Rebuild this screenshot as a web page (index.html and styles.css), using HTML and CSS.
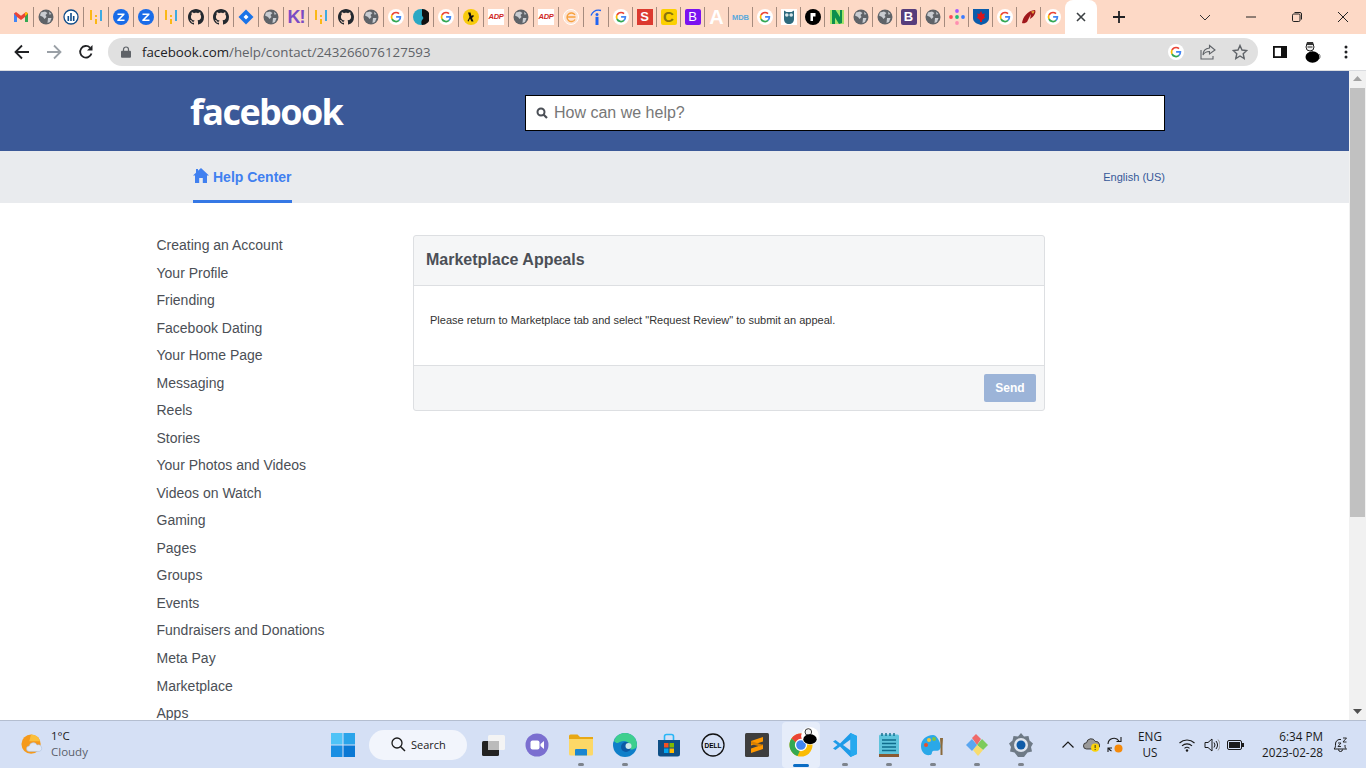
FILE: index.html
```html
<!DOCTYPE html>
<html lang="en">
<head>
    <meta charset="UTF-8">
    <title>Marketplace Appeals</title>
    <link rel="stylesheet" href="styles.css">
</head>
<body>

<svg class="defs" width="0" height="0">
    <symbol id="i-gmail" viewBox="0 0 16 16">
        <path d="M1 4v9h3V7z" fill="#4285f4"/><path d="M15 4v9h-3V7z" fill="#34a853"/>
        <path d="M1 4.500 3 3l5 3.800L13 3l2 1.500L12 8 8 11 4 8z" fill="#ea4335"/><path d="M12 3.800 13.500 3 15 4.500 12 7z" fill="#fbbc04"/>
    </symbol>
    <symbol id="i-globe" viewBox="0 0 16 16">
        <circle cx="8" cy="8" r="7.500" fill="#5f6368"/>
        <path d="M3 3.500 7 2.500 9.500 4 7.500 6 8.500 8 6.500 10 5 8 2 6.500zM10 9h3.500l-1.500 4-2.500 1zM11 2.800l2.500 2.200-2 .8z" fill="#c9ccd1"/>
    </symbol>
    <symbol id="i-allianz" viewBox="0 0 16 16">
        <circle cx="8" cy="8" r="7" fill="#fff" stroke="#0f4c8a" stroke-width="1.300"/>
        <path d="M4.500 7h1.600v5H4.500zM7.200 4h1.600v8H7.200zM9.900 7h1.600v5H9.900z" fill="#0f4c8a"/>
    </symbol>
    <symbol id="i-bars" viewBox="0 0 16 16">
        <path d="M3 1v10" stroke="#fbb400" stroke-width="1.800"/><path d="M8 6v2M8 10v5" stroke="#fbb400" stroke-width="1.800"/>
        <path d="M13 1v11" stroke="#29a5e6" stroke-width="1.800"/>
    </symbol>
    <symbol id="i-z" viewBox="0 0 16 16">
        <circle cx="8" cy="8" r="8" fill="#1a6ce8"/>
        <path d="M4.500 4.500h7v1.300L6.800 10.500h4.700v1.500h-7.200v-1.300L9 6H4.500z" fill="#fff"/>
    </symbol>
    <symbol id="i-github" viewBox="0 0 16 16">
        <path d="M8 0C3.580 0 0 3.580 0 8c0 3.540 2.290 6.530 5.470 7.590.4.070.55-.17.55-.38 0-.19-.01-.82-.01-1.490-2.010.37-2.530-.49-2.690-.94-.09-.23-.48-.94-.82-1.130-.28-.15-.68-.52-.01-.53.63-.01 1.080.58 1.230.82.72 1.210 1.870.87 2.330.66.070-.52.28-.87.51-1.070-1.780-.2-3.640-.89-3.640-3.950 0-.87.31-1.590.82-2.150-.08-.2-.36-1.020.08-2.120 0 0 .67-.21 2.200.82.64-.18 1.320-.27 2-.27s1.360.09 2 .27c1.530-1.040 2.200-.82 2.200-.82.44 1.100.16 1.920.08 2.120.51.56.82 1.270.82 2.150 0 3.070-1.870 3.750-3.650 3.950.29.25.54.73.54 1.480 0 1.070-.01 1.930-.01 2.200 0 .21.15.46.55.38A8.010 8.010 0 0016 8c0-4.420-3.580-8-8-8z" fill="#24292f"/>
    </symbol>
    <symbol id="i-jira" viewBox="0 0 16 16">
        <path d="M8 .5 15.500 8 8 15.500.5 8z" fill="#1a73e8"/><path d="M8 5.500 10.500 8 8 10.500 5.500 8z" fill="#fff"/>
    </symbol>
    <symbol id="i-google" viewBox="0 0 16 16">
        <circle cx="8" cy="8" r="8" fill="#fff"/>
        <path d="M8 3.500A4.500 4.500 0 0 1 11 4.700" fill="none" stroke="#ea4335" stroke-width="1.700"/>
        <path d="M8 3.500A4.500 4.500 0 0 0 4 6" fill="none" stroke="#ea4335" stroke-width="1.700"/>
        <path d="M4 6A4.500 4.500 0 0 0 4 10" fill="none" stroke="#fbbc04" stroke-width="1.700"/>
        <path d="M4 10A4.500 4.500 0 0 0 11 11.400" fill="none" stroke="#34a853" stroke-width="1.700"/>
        <path d="M8.100 7.900h4.300A4.500 4.500 0 0 1 11 11.400" fill="none" stroke="#4285f4" stroke-width="1.700"/>
    </symbol>
    <symbol id="i-moon" viewBox="0 0 16 16">
        <circle cx="8" cy="8" r="8" fill="#2ba8c4"/>
        <path d="M9 0a8 8 0 0 1 0 16c-1-1-.5-3-.5-4L10.500 9 9 6.500z" fill="#111"/>
    </symbol>
    <symbol id="i-yp" viewBox="0 0 16 16">
        <circle cx="8" cy="8" r="8" fill="#f8cb0c"/>
        <path d="M5 3.500h2.500L8.500 7l1.500-1 1 1-2 2L10.500 12.500H8.500L7 9.500 5.500 12.500 4.500 12 6.500 8z" fill="#111"/>
    </symbol>
    <symbol id="i-e" viewBox="0 0 16 16">
        <circle cx="8" cy="8" r="7.500" fill="#fde3d3" stroke="#fff" stroke-width="1"/>
        <path d="M3.500 8h9M12 6A4.300 4.300 0 1 0 12 10.500" fill="none" stroke="#f7a13c" stroke-width="1.400"/>
    </symbol>
    <symbol id="i-info" viewBox="0 0 16 16">
        <circle cx="9" cy="5.500" r="1.500" fill="#2164f3"/><path d="M7.500 7.800h3V16h-3z" fill="#2164f3"/>
        <path d="M3 6.500C5 2 9 .5 13 1.500" fill="none" stroke="#2164f3" stroke-width="1.300"/>
    </symbol>
    <symbol id="i-owl" viewBox="0 0 16 16">
        <rect width="16" height="16" fill="#fff"/>
        <path d="M3 1.500 5.500 3h5L13 1.500V10c0 3-2 5-5 5s-5-2-5-5z" fill="#2d6a7d"/>
        <circle cx="5.800" cy="6" r="1.800" fill="#d6e6ea"/><circle cx="10.200" cy="6" r="1.800" fill="#d6e6ea"/>
    </symbol>
    <symbol id="i-r" viewBox="0 0 16 16">
        <circle cx="8" cy="8" r="8" fill="#000"/>
        <path d="M5.500 4h5v3.500H8V12H5.500z" fill="#fff"/>
    </symbol>
    <symbol id="i-n" viewBox="0 0 16 16">
        <path d="M1 1h14v14H1z" fill="#a4e36c"/>
        <path d="M3 1h3.500L11 8V1h2v13L10 15 6 8.500V15H3z" fill="#0b8f4d"/>
    </symbol>
    <symbol id="i-dots" viewBox="0 0 16 16">
        <circle cx="8" cy="2" r="1.900" fill="#a259ff"/><circle cx="2" cy="8" r="1.900" fill="#ff4d5a"/>
        <circle cx="8" cy="8" r="1.900" fill="#1abc7b"/><circle cx="14" cy="8" r="1.900" fill="#3a7bff"/>
        <circle cx="8" cy="14" r="1.900" fill="#ff8fb1"/>
    </symbol>
    <symbol id="i-shield" viewBox="0 0 16 16">
        <path d="M0 0h16v9c0 4-4 6-8 7-4-1-8-3-8-7z" fill="#0b5cab"/>
        <path d="M8 2 9.500 5 12 4.500 11 7.500 12.500 8.500 9 11v2H7v-2L3.500 8.500 5 7.500 4 4.500 6.500 5z" fill="#d8171e"/>
    </symbol>
    <symbol id="i-swoosh" viewBox="0 0 16 16">
        <path d="M1 14C2 8 6 2 14 1c1.500 2-1 7-5 9l1-5-4 8c-2 1.500-4 1.500-5 1z" fill="#a0181c"/>
        <path d="M10 2.500c2-.8 3.500-.6 3.500 0L12 5z" fill="#e8a33c"/>
    </symbol>
</svg>

<div class="tabstrip">
    <div class="tab"><svg class="fav"><use href="#i-gmail"/></svg></div>
    <div class="tab"><svg class="fav"><use href="#i-globe"/></svg></div>
    <div class="tab"><svg class="fav"><use href="#i-allianz"/></svg></div>
    <div class="tab"><svg class="fav"><use href="#i-bars"/></svg></div>
    <div class="tab"><svg class="fav"><use href="#i-z"/></svg></div>
    <div class="tab"><svg class="fav"><use href="#i-z"/></svg></div>
    <div class="tab"><svg class="fav"><use href="#i-bars"/></svg></div>
    <div class="tab"><svg class="fav"><use href="#i-github"/></svg></div>
    <div class="tab"><svg class="fav"><use href="#i-github"/></svg></div>
    <div class="tab"><svg class="fav"><use href="#i-jira"/></svg></div>
    <div class="tab"><svg class="fav"><use href="#i-globe"/></svg></div>
    <div class="tab"><span class="fav-k">K!</span></div>
    <div class="tab"><svg class="fav"><use href="#i-bars"/></svg></div>
    <div class="tab"><svg class="fav"><use href="#i-github"/></svg></div>
    <div class="tab"><svg class="fav"><use href="#i-globe"/></svg></div>
    <div class="tab"><svg class="fav"><use href="#i-google"/></svg></div>
    <div class="tab"><svg class="fav"><use href="#i-moon"/></svg></div>
    <div class="tab"><svg class="fav"><use href="#i-google"/></svg></div>
    <div class="tab"><svg class="fav"><use href="#i-yp"/></svg></div>
    <div class="tab"><span class="fav-adp">ADP</span></div>
    <div class="tab"><svg class="fav"><use href="#i-globe"/></svg></div>
    <div class="tab"><span class="fav-adp">ADP</span></div>
    <div class="tab"><svg class="fav"><use href="#i-e"/></svg></div>
    <div class="tab"><svg class="fav"><use href="#i-info"/></svg></div>
    <div class="tab tab-sm"><svg class="fav"><use href="#i-google"/></svg></div>
    <div class="tab tab-sm"><span class="fav-box fav-s">S</span></div>
    <div class="tab tab-sm"><span class="fav-box fav-c">C</span></div>
    <div class="tab tab-sm"><span class="fav-box fav-b">B</span></div>
    <div class="tab tab-sm"><span class="fav-a">A</span></div>
    <div class="tab tab-sm"><span class="fav-mdb">MDB</span></div>
    <div class="tab tab-sm"><svg class="fav"><use href="#i-google"/></svg></div>
    <div class="tab tab-sm"><svg class="fav"><use href="#i-owl"/></svg></div>
    <div class="tab tab-sm"><svg class="fav"><use href="#i-r"/></svg></div>
    <div class="tab tab-sm"><svg class="fav"><use href="#i-n"/></svg></div>
    <div class="tab tab-sm"><svg class="fav"><use href="#i-globe"/></svg></div>
    <div class="tab tab-sm"><svg class="fav"><use href="#i-globe"/></svg></div>
    <div class="tab tab-sm"><span class="fav-box fav-b2">B</span></div>
    <div class="tab tab-sm"><svg class="fav"><use href="#i-globe"/></svg></div>
    <div class="tab tab-sm"><svg class="fav"><use href="#i-dots"/></svg></div>
    <div class="tab tab-sm"><svg class="fav"><use href="#i-shield"/></svg></div>
    <div class="tab tab-sm"><svg class="fav"><use href="#i-google"/></svg></div>
    <div class="tab tab-sm"><svg class="fav"><use href="#i-swoosh"/></svg></div>
    <div class="tab tab-sm tab-last"><svg class="fav"><use href="#i-google"/></svg></div>
    <div class="tab-active">
        <svg width="10" height="10" viewBox="0 0 10 10"><path d="M1 1l8 8M9 1 1 9" stroke="#3c4043" stroke-width="1.600"/></svg>
    </div>
    <div class="new-tab">
        <svg width="12" height="12" viewBox="0 0 12 12"><path d="M6 0v12M0 6h12" stroke="#202124" stroke-width="1.800"/></svg>
    </div>
    <div class="win-controls">
        <div class="win-btn"><svg width="12" height="7" viewBox="0 0 12 7"><path d="M1 1l5 5 5-5" fill="none" stroke="#333" stroke-width="1"/></svg></div>
        <div class="win-btn"><svg width="10" height="10" viewBox="0 0 10 10"><path d="M0 5h10" stroke="#222" stroke-width="1"/></svg></div>
        <div class="win-btn"><svg width="10" height="10" viewBox="0 0 10 10"><rect x=".5" y="2" width="7.500" height="7.500" rx="1.200" fill="none" stroke="#222"/><path d="M2.500 .5h5.500a1.500 1.500 0 0 1 1.500 1.500v5.500" fill="none" stroke="#222"/></svg></div>
        <div class="win-btn"><svg width="10" height="10" viewBox="0 0 10 10"><path d="M0 0l10 10M10 0 0 10" stroke="#222" stroke-width="1"/></svg></div>
    </div>
</div>

<div class="toolbar">
    <svg class="nav-icon" viewBox="0 0 16 16"><path d="M15 8H2M8 1.500 1.500 8 8 14.500" fill="none" stroke="#202124" stroke-width="1.800"/></svg>
    <svg class="nav-icon" viewBox="0 0 16 16"><path d="M1 8h13M8 1.500 14.500 8 8 14.500" fill="none" stroke="#9aa0a6" stroke-width="1.800"/></svg>
    <svg class="nav-icon" viewBox="0 0 16 16"><path d="M13.500 9.500A5.800 5.800 0 1 1 12 3.600" fill="none" stroke="#202124" stroke-width="1.800"/><path d="M14.500 1v5.500H9z" fill="#202124"/></svg>
    <div class="omnibox">
        <svg class="lock" viewBox="0 0 10 12"><path d="M2.500 5V3.500a2.500 2.500 0 0 1 5 0V5" fill="none" stroke="#5f6368" stroke-width="1.200"/><rect y="4.800" width="10" height="7" rx="1" fill="#5f6368"/></svg>
        <span class="url"><span class="url-host">facebook.com</span>/help/contact/243266076127593</span>
        <svg class="omni-g"><use href="#i-google"/></svg>
        <svg class="omni-icon" viewBox="0 0 16 16"><path d="M9.500 1.500 15 6l-5.500 4V7.500C6 7.500 4 9 3 11c0-4 2.500-6.500 6.500-7zM1 6v9h12v-3" fill="none" stroke="#5f6368" stroke-width="1.100"/></svg>
        <svg class="omni-icon" viewBox="0 0 16 16"><path d="M8 1.500 10 6l4.800.5-3.600 3.200 1 4.800L8 12l-4.200 2.500 1-4.800L1.200 6.500 6 6z" fill="none" stroke="#5f6368" stroke-width="1.400"/></svg>
    </div>
    <svg class="side-icon" viewBox="0 0 14 12"><rect x=".9" y=".9" width="12.200" height="10.200" fill="#fff" stroke="#111" stroke-width="1.800"/><rect x="8" y="1" width="5" height="10" fill="#111"/></svg>
    <svg class="avatar" viewBox="0 0 18 22"><circle cx="7" cy="6" r="4" fill="#eee" stroke="#222"/><path d="M3 4 4 1h6l1 3z" fill="#333"/><path d="M4.500 6h5" stroke="#222"/><ellipse cx="9.500" cy="16" rx="7" ry="5.800" fill="#000"/><path d="M16 13c1.500 1 1.500 4 0 5" fill="none" stroke="#777"/></svg>
    <svg class="menu-dots" viewBox="0 0 4 14"><circle cx="2" cy="2" r="1.500" fill="#202124"/><circle cx="2" cy="7" r="1.500" fill="#202124"/><circle cx="2" cy="12" r="1.500" fill="#202124"/></svg>
</div>

<div class="viewport">
    <div class="page">
        <header class="fb-header">
            <div class="fb-logo">facebook</div>
            <div class="search-box">
                <svg class="search-icon" viewBox="0 0 12 12"><circle cx="5" cy="5" r="3.500" fill="none" stroke="#4b4f56" stroke-width="2"/><path d="M7.500 7.500 11 11" stroke="#4b4f56" stroke-width="2.200"/></svg>
                <span class="search-text">How can we help?</span>
            </div>
        </header>
        <nav class="subnav">
            <a class="help-tab">
                <svg class="home-icon" viewBox="0 0 16 15"><path d="M8 0 16 7.500h-2V15H9.800v-5H6.200v5H2V7.500H0L3 4.700V1h2v1.800z" fill="#4080f0"/></svg>
                Help Center
            </a>
            <a class="lang">English (US)</a>
        </nav>
        <div class="main">
            <ul class="side-menu">
                <li>Creating an Account</li>
                <li>Your Profile</li>
                <li>Friending</li>
                <li>Facebook Dating</li>
                <li>Your Home Page</li>
                <li>Messaging</li>
                <li>Reels</li>
                <li>Stories</li>
                <li>Your Photos and Videos</li>
                <li>Videos on Watch</li>
                <li>Gaming</li>
                <li>Pages</li>
                <li>Groups</li>
                <li>Events</li>
                <li>Fundraisers and Donations</li>
                <li>Meta Pay</li>
                <li>Marketplace</li>
                <li>Apps</li>
            </ul>
            <section class="card">
                <h2 class="card-title">Marketplace Appeals</h2>
                <div class="card-body">Please return to Marketplace tab and select "Request Review" to submit an appeal.</div>
                <div class="card-foot"><button class="send-btn">Send</button></div>
            </section>
        </div>
    </div>
    <div class="scrollbar">
        <svg class="sb-arrow" viewBox="0 0 9 5"><path d="M4.500 0 9 5H0z" fill="#a3a3a3"/></svg>
        <div class="sb-thumb"></div>
        <svg class="sb-arrow sb-down" viewBox="0 0 9 5"><path d="M0 0h9L4.500 5z" fill="#505050"/></svg>
    </div>
</div>

<footer class="taskbar">
    <div class="weather">
        <svg class="weather-icon" viewBox="0 0 24 24"><circle cx="11" cy="11" r="10.500" fill="#f59a1c"/><path d="M11 .5A10.500 10.500 0 0 1 21 8H9z" fill="#fbbf3b"/><path d="M9 19a3 3 0 0 1 0-6 4.500 4.500 0 0 1 8.500-1 3.500 3.500 0 0 1 2.500 7z" fill="#dfe8f6" stroke="#a7bcdc" stroke-width=".6"/></svg>
        <div class="weather-text"><div>1°C</div><div class="weather-sub">Cloudy</div></div>
    </div>
    <div class="task-item">
        <svg class="task-icon" viewBox="0 0 24 24"><path d="M0 0h11.500v11.500H0z" fill="#4fc3f7"/><path d="M12.500 0H24v11.500H12.500z" fill="#2aa4ea"/><path d="M0 12.500h11.500V24H0z" fill="#1a8fe3"/><path d="M12.500 12.500H24V24H12.500z" fill="#0a78d4"/></svg>
    </div>
    <div class="search-pill">
        <svg width="15" height="15" viewBox="0 0 15 15"><circle cx="6" cy="6" r="5" fill="none" stroke="#1a1a1a" stroke-width="1.300"/><path d="M9.700 9.700 14 14" stroke="#1a1a1a" stroke-width="1.500"/></svg>
        <span>Search</span>
    </div>
    <div class="task-item">
        <svg class="task-icon" viewBox="0 0 24 24"><rect x="1" y="8" width="17" height="15" rx="1.500" fill="#222"/><rect x="7" y="2" width="17" height="15" rx="1.500" fill="#f4f4f4"/><path d="M7 8h11v9H7z" fill="#bbb"/></svg>
    </div>
    <div class="task-item">
        <svg class="task-icon" viewBox="0 0 24 24"><circle cx="12" cy="12" r="11.500" fill="#7b6fd0"/><rect x="5.500" y="7.500" width="9" height="9" rx="2" fill="#fff"/><path d="M15.500 11 19 8v8l-3.500-3z" fill="#fff"/></svg>
    </div>
    <div class="task-item running">
        <svg class="task-icon" viewBox="0 0 24 24"><path d="M0 3a1.500 1.500 0 0 1 1.500-1.500h7L11 4h13v4H0z" fill="#e8a815"/><path d="M0 6h24v15a1.500 1.500 0 0 1-1.500 1.500h-21A1.500 1.500 0 0 1 0 21z" fill="#fcd867"/><path d="M7 16h10a1 1 0 0 1 1 1v5.500H6V17a1 1 0 0 1 1-1z" fill="#1a86d0"/></svg>
    </div>
    <div class="task-item running">
        <svg class="task-icon" viewBox="0 0 24 24"><circle cx="12" cy="12" r="12" fill="#0f7fc9"/><path d="M1 8C3 2 8 0 12 0c7 0 12 5 12 12 0 3-3 4.500-6 4.500-3 0-4-1.500-4-2.500 2-1 2-6-3-6-3 0-4.500 1-6 2-1.500 .5-3-1-4-2z" fill="#3ecf8e"/><circle cx="13" cy="14" r="5" fill="#0c59a4"/><circle cx="15.500" cy="13" r="3" fill="#cfe6ea"/></svg>
    </div>
    <div class="task-item">
        <svg class="task-icon" viewBox="0 0 24 24"><path d="M1 7h22v14a2.500 2.500 0 0 1-2.500 2.500h-17A2.500 2.500 0 0 1 1 21z" fill="#0e4f86"/><path d="M7.500 7V3.500a2 2 0 0 1 2-2h5a2 2 0 0 1 2 2V7" fill="none" stroke="#29b6f6" stroke-width="1.600"/><path d="M7 10h4.500v4.500H7z" fill="#f25022"/><path d="M12.500 10H17v4.500h-4.500z" fill="#7fba00"/><path d="M7 15.500h4.500V20H7z" fill="#00a4ef"/><path d="M12.500 15.500H17V20h-4.500z" fill="#ffb900"/></svg>
    </div>
    <div class="task-item">
        <svg class="task-icon" viewBox="0 0 24 24"><circle cx="12" cy="12" r="11" fill="none" stroke="#111" stroke-width="1.300"/><text x="12" y="14.500" class="dell-text">DELL</text></svg>
    </div>
    <div class="task-item">
        <svg class="task-icon" viewBox="0 0 24 24"><rect width="24" height="24" rx="1.500" fill="#3e3e3e"/><path d="M18 4v4.500L6 12.500V8zM18 11.500V16L6 20v-4.500z" fill="#ff9800"/><path d="M6 8l12 4-3 1.500L6 11z" fill="#d97f00"/></svg>
    </div>
    <div class="task-item task-active">
        <svg class="task-icon" viewBox="0 0 24 24"><circle cx="12" cy="12" r="11.500" fill="#fbbc04"/><path d="M12 .5A11.500 11.500 0 0 1 22 6.500H12a5.500 5.500 0 0 0-5 3L2.500 5.500A11.500 11.500 0 0 1 12 .5z" fill="#ea4335"/><path d="M2.500 5.500 7 9.500a5.500 5.500 0 0 0 4 8l-2.500 5.500A11.500 11.500 0 0 1 2.500 5.500z" fill="#34a853"/><circle cx="12" cy="12" r="5.500" fill="#4285f4" stroke="#fff" stroke-width="1.300"/></svg>
        <svg class="task-badge" viewBox="0 0 16 18"><circle cx="8" cy="8" r="8" fill="#fff"/><circle cx="6.500" cy="4.500" r="3" fill="#eee" stroke="#222" stroke-width=".8"/><ellipse cx="8" cy="11" rx="6" ry="4.500" fill="#000"/></svg>
    </div>
    <div class="task-item running">
        <svg class="task-icon" viewBox="0 0 24 24"><path d="M17.500 0 24 3v18l-6.500 3L7 13.500 2.500 17 0 15.500 4.500 12 0 8.500 2.500 7 7 10.500z" fill="#1e9be8"/><path d="M17.500 6.500 10 12l7.500 5.500z" fill="#d6e0f5"/><path d="M17.500 0 24 3v18l-6.500 3z" fill="#26a9ef"/></svg>
    </div>
    <div class="task-item running">
        <svg class="task-icon" viewBox="0 0 20 24"><rect y="1.500" width="20" height="22.500" rx="1.500" fill="#5fc4dc"/><rect y="21" width="20" height="3" fill="#8a5a32"/><path d="M3 0v3M7 0v3M11 0v3M15 0v3" stroke="#0f6c8c" stroke-width="1.400"/><path d="M3 7h14M3 10.500h14M3 14h14M3 17.500h14" stroke="#0f6c8c" stroke-width="1.400"/></svg>
    </div>
    <div class="task-item running">
        <svg class="task-icon" viewBox="0 0 24 24"><path d="M12 2C5 2 0 7 0 13s4 10 9 9c3-.5 1-3 3-4s5 1 7-2c1.500-2 1-4 0-6-1-3-3.500-8-7-8z" fill="#2aa8e8"/><circle cx="5" cy="12" r="2" fill="#e8502a"/><circle cx="8" cy="7" r="2" fill="#f5c33b"/><circle cx="13" cy="6" r="2" fill="#7fc241"/><path d="M19 5h3l-.5 8v9h-2v-9z" fill="#8a6a3c"/></svg>
    </div>
    <div class="task-item running">
        <svg class="task-icon" viewBox="0 0 24 24"><path d="M12 12 7 5l4-4 5 5z" fill="#ef6a6a"/><path d="M12 12l5-6 6 6-5 5z" fill="#7ccb5c"/><path d="M12 12l6 5-5 6-5-6z" fill="#f7dc6f"/><path d="M12 12l-5 6-6-6 6-6z" fill="#5aa6f0"/></svg>
    </div>
    <div class="task-item running">
        <svg class="task-icon" viewBox="0 0 24 24"><path d="M12 0l3 3.500 4.500-.5 1 4.500L24 10.500 22 14l1 4.500-4.500 1L15 24h-6l-3.500-4.500-4.500-1L2 14 0 10.500l3.500-3 1-4.500L9 3.500z" fill="#6e7a86"/><circle cx="12" cy="12" r="7" fill="#dfe5ee"/><circle cx="12" cy="12" r="4.500" fill="#0f5ca8"/></svg>
    </div>
    <div class="tray">
        <svg class="tray-chevron" width="12" height="7" viewBox="0 0 12 7"><path d="M.5 6.500 6 1l5.500 5.500" fill="none" stroke="#1a1a1a" stroke-width="1.200"/></svg>
        <div class="tray-cloud">
            <svg width="18" height="15" viewBox="0 0 20 16"><path d="M4 13a3.500 3.500 0 0 1 0-7 5 5 0 0 1 9.500-1.500A4.500 4.500 0 0 1 16 13z" fill="#9a9a9a" stroke="#222" stroke-width=".9"/><circle cx="13.500" cy="11.500" r="4.500" fill="#fbd40a"/><path d="M13.500 8.500v3.500M13.500 13v1.200" stroke="#222" stroke-width="1"/></svg>
        </div>
        <svg class="tray-sync" width="18" height="18" viewBox="0 0 18 18"><path d="M2 8a6 6 0 0 1 11-3M15 1v4.500h-4.500M2 16v-4h4M2.500 12a6 6 0 0 0 3 3" fill="none" stroke="#1a1a1a" stroke-width="1.100"/><circle cx="12.500" cy="12.500" r="4" fill="#f58a0b"/></svg>
        <div class="tray-lang"><div>ENG</div><div>US</div></div>
        <svg class="tray-wifi" width="16" height="14" viewBox="0 0 16 14"><path d="M.5 5a11 11 0 0 1 15 0M3 7.800a7.500 7.500 0 0 1 10 0M5.500 10.300a3.800 3.800 0 0 1 5 0" fill="none" stroke="#1a1a1a" stroke-width="1.100"/><circle cx="8" cy="12.500" r="1.200" fill="#1a1a1a"/></svg>
        <svg class="tray-sound" width="16" height="14" viewBox="0 0 16 14"><path d="M1 4.500h3L8 1v12L4 9.500H1z" fill="none" stroke="#1a1a1a"/><path d="M10 4.500a4 4 0 0 1 0 5M12 3a6.500 6.500 0 0 1 0 8" fill="none" stroke="#1a1a1a"/><path d="M14 1.500a8.500 8.500 0 0 1 0 11" fill="none" stroke="#999"/></svg>
        <svg class="tray-batt" width="17" height="10" viewBox="0 0 17 10"><rect x=".5" y=".5" width="14" height="9" rx="1.500" fill="none" stroke="#1a1a1a"/><rect x="2" y="2" width="11" height="6" fill="#1a1a1a"/><rect x="15" y="3" width="2" height="4" fill="#1a1a1a"/></svg>
        <div class="tray-clock"><div>6:34 PM</div><div>2023-02-28</div></div>
        <svg class="tray-bell" width="15" height="15" viewBox="0 0 15 15"><path d="M1 12c1.500-1 1.500-3 1.500-5A4.500 4.500 0 0 1 8 2.500M1 12h12.500c-1.500-1-1.500-2-1.500-4M5.500 12.500a2 2 0 0 0 4 0" fill="none" stroke="#1a1a1a"/><path d="M10 1h3.500L10 5h3.500M5 6h3L5 9.500h3" fill="none" stroke="#1a1a1a" stroke-width=".9"/></svg>
    </div>
</footer>

</body>
</html>
```

FILE: styles.css
```css
* {
    box-sizing: border-box;
}
html, body {
    height: 100%;
}
body {
    margin: 0;
    display: flex;
    flex-direction: column;
    overflow: hidden;
    font-family: "Liberation Sans", Arial, sans-serif;
    background: #fff;
}
.defs {
    position: absolute;
}

/* browser tabs */
.tabstrip {
    height: 34px;
    flex: none;
    display: flex;
    align-items: stretch;
    padding-left: 9px;
    background: #fdd9c6;
}
.tab {
    width: 25px;
    flex: none;
    display: flex;
    align-items: center;
    justify-content: center;
    overflow: hidden;
    padding-right: 1px;
    background: linear-gradient(#a58b7e, #a58b7e) right 7px / 1px 20px no-repeat;
}
.tab-sm {
    width: 24px;
}
.tab-last {
    background: none;
}
.fav {
    width: 16px;
    height: 16px;
}
.fav-k {
    color: #7b4bc4;
    font: bold 18px "Liberation Sans", sans-serif;
    letter-spacing: -1px;
}
.fav-adp {
    width: 16px;
    height: 16px;
    background: #fff;
    color: #d0271d;
    font: italic bold 7.500px/16px "Liberation Sans", sans-serif;
    letter-spacing: -.3px;
    text-align: center;
}
.fav-box {
    width: 16px;
    height: 16px;
    border-radius: 2px;
    color: #fff;
    font: bold 13px/16px "Liberation Sans", sans-serif;
    text-align: center;
}
.fav-s { background: #dc3a30; border-radius: 0; }
.fav-c { background: #fcd000; color: #8a7410; font-size: 15px; }
.fav-b { background: #7a12f0; font-weight: normal; }
.fav-b2 { background: #563d7c; }
.fav-a {
    color: #fff;
    font: bold 20px/24px "Liberation Sans", sans-serif;
}
.fav-mdb {
    color: #5aa9dd;
    font: bold 7.500px "Liberation Sans", sans-serif;
}
.tab-active {
    width: 32px;
    flex: none;
    display: flex;
    align-items: center;
    justify-content: center;
    background: #fff;
    border-radius: 8px 8px 0 0;
}
.new-tab {
    width: 44px;
    display: flex;
    align-items: center;
    justify-content: center;
}
.win-controls {
    margin-left: auto;
    display: flex;
}
.win-btn {
    width: 46px;
    display: flex;
    align-items: center;
    justify-content: center;
}

/* address bar */
.toolbar {
    height: 37px;
    flex: none;
    display: flex;
    align-items: center;
    padding-left: 14px;
    background: #fff;
    border-bottom: 1px solid #dadce0;
}
.nav-icon {
    width: 16px;
    height: 16px;
    margin-right: 16px;
}
.omnibox {
    width: 1150px;
    height: 28px;
    margin-left: -2px;
    display: flex;
    align-items: center;
    padding: 0 10px 0 13px;
    border-radius: 14px;
    background: #e0e0e0;
}
.lock {
    width: 10px;
    height: 12px;
    margin-right: 11px;
}
.url {
    flex: 1;
    color: #5f6368;
    font: 13.300px "Open Sans", sans-serif;
}
.url-host {
    color: #202124;
}
.omni-g {
    width: 16px;
    height: 16px;
    margin-right: 16px;
}
.omni-icon {
    width: 16px;
    height: 16px;
    margin-right: 16px;
}
.omni-icon:last-child {
    margin-right: 0;
}
.side-icon {
    width: 14px;
    height: 12px;
    margin-left: 15px;
}
.avatar {
    width: 18px;
    height: 22px;
    margin-left: 16px;
}
.menu-dots {
    width: 4px;
    height: 14px;
    margin-left: 23px;
}

/* page */
.viewport {
    flex: 1;
    min-height: 0;
    display: flex;
}
.page {
    flex: 1;
    min-width: 0;
    overflow: hidden;
}
.fb-header {
    height: 80px;
    display: flex;
    align-items: center;
    padding-left: 190px;
    background: #3b5998;
}
.fb-logo {
    width: 335px;
    color: #fff;
    font: bold 36px "Open Sans", sans-serif;
    letter-spacing: -1.600px;
}
.search-box {
    width: 640px;
    height: 36px;
    margin-top: 4px;
    display: flex;
    align-items: center;
    padding-left: 10px;
    background: #fff;
    border: 1px solid #000;
}
.search-icon {
    width: 12px;
    height: 12px;
    margin-right: 6px;
}
.search-text {
    color: #777;
    font-size: 16px;
}
.subnav {
    height: 52px;
    display: flex;
    justify-content: space-between;
    padding: 0 184px 0 193px;
    background: #e9ebee;
}
.help-tab {
    display: flex;
    align-items: center;
    gap: 4px;
    padding-top: 2px;
    border-bottom: 3px solid #3578e5;
    color: #4080f0;
    font-size: 14px;
    font-weight: bold;
}
.home-icon {
    width: 16px;
    height: 15px;
    margin-top: -3px;
}
.lang {
    align-self: center;
    color: #365899;
    font-size: 11px;
}
.main {
    display: flex;
    align-items: flex-start;
    padding: 29px 0 0 156.500px;
}
.side-menu {
    width: 256.500px;
    flex: none;
    margin: 0;
    padding: 0;
    list-style: none;
    color: #4b4f56;
    font-size: 14px;
    line-height: 27.530px;
}
.card {
    width: 632px;
    height: 176px;
    margin-top: 3px;
    display: flex;
    flex-direction: column;
    overflow: hidden;
    background: #f5f6f7;
    border: 1px solid #dddfe2;
    border-radius: 3px;
}
.card-title {
    height: 50px;
    flex: none;
    margin: 0;
    padding-left: 12px;
    color: #4b4f56;
    font-size: 16px;
    line-height: 48px;
    border-bottom: 1px solid #dddfe2;
}
.card-body {
    height: 80px;
    flex: none;
    padding: 27px 16px 0;
    color: #333;
    font-size: 11px;
    line-height: 15px;
    background: #fff;
    border-bottom: 1px solid #dddfe2;
}
.card-foot {
    flex: 1;
    display: flex;
    justify-content: flex-end;
    align-items: flex-start;
    padding: 8px 8px 0 0;
}
.send-btn {
    width: 52px;
    height: 28px;
    padding: 0;
    border: 0;
    border-radius: 2px;
    color: #fff;
    background: #9cb4d8;
    font: bold 12px "Liberation Sans", sans-serif;
}
.scrollbar {
    width: 17px;
    flex: none;
    display: flex;
    flex-direction: column;
    align-items: center;
    padding-top: 5px;
    background: #f1f1f1;
}
.sb-arrow {
    width: 9px;
    height: 5px;
    flex: none;
}
.sb-thumb {
    width: 15px;
    height: 429px;
    margin-top: 7px;
    background: #c1c1c1;
}
.sb-down {
    margin-top: auto;
    margin-bottom: 6px;
}

/* windows taskbar */
.taskbar {
    height: 48px;
    flex: none;
    display: flex;
    align-items: center;
    background: #d5e0f5;
    border-top: 1px solid #b4bed0;
    color: #1a1a1a;
    font-family: "Open Sans", sans-serif;
}
.weather {
    width: 321px;
    flex: none;
    display: flex;
    align-items: center;
    gap: 8px;
    padding: 0 0 2px 21px;
    font-size: 11.500px;
    line-height: 16px;
}
.weather-icon {
    width: 22px;
    height: 22px;
    margin-top: 2px;
}
.weather-sub {
    color: #5a5f6a;
}
.task-item {
    position: relative;
    width: 44px;
    height: 46px;
    flex: none;
    display: flex;
    align-items: center;
    justify-content: center;
}
.task-icon {
    width: 24px;
    height: 24px;
}
.running::after {
    content: "";
    position: absolute;
    left: 19px;
    bottom: 2px;
    width: 6px;
    height: 3px;
    border-radius: 2px;
    background: #7d838c;
}
.task-active {
    width: 38px;
    margin: 0 3px;
    border-radius: 4px;
    background: #e6edfa;
}
.task-active::after {
    content: "";
    position: absolute;
    left: 11px;
    bottom: 1px;
    width: 16px;
    height: 3px;
    border-radius: 2px;
    background: #0a6cc4;
}
.task-badge {
    position: absolute;
    top: 5px;
    right: 1px;
    width: 18px;
    height: 20px;
}
.dell-text {
    font: bold 6.500px "Liberation Sans", sans-serif;
    text-anchor: middle;
}
.search-pill {
    width: 98px;
    height: 30px;
    flex: none;
    display: flex;
    align-items: center;
    gap: 5px;
    margin: 0 4px;
    padding-left: 22px;
    border-radius: 15px;
    background: #f2f5fc;
    font-size: 11px;
}
.tray {
    flex: 1;
    display: flex;
    align-items: center;
    padding-left: 19px;
    font-size: 11.700px;
    line-height: 16px;
}
.tray-cloud {
    display: flex;
    margin-left: 9px;
}
.tray-sync {
    margin-left: 5px;
}
.tray-lang {
    width: 30px;
    margin: -2px 0 0 11px;
    text-align: center;
}
.tray-wifi {
    margin-left: 14px;
}
.tray-sound {
    margin-left: 9px;
}
.tray-batt {
    margin-left: 7px;
}
.tray-clock {
    width: 70px;
    margin: -2px 0 0 9px;
    text-align: right;
}
.tray-bell {
    margin-left: 10px;
}
```
